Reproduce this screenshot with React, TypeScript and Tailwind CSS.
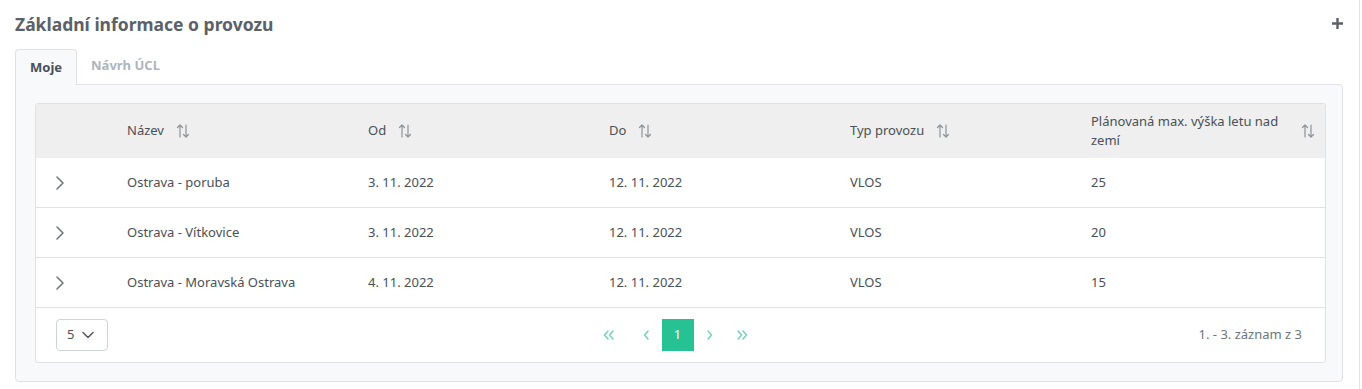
import React from "react";

const font = { fontFamily: '"Noto Sans", "Open Sans", sans-serif' };

function SortIcon() {
  return (
    <svg width="14" height="14" viewBox="0 0 14 14" fill="none" stroke="#8c939a" strokeWidth="1.2" strokeLinecap="round" strokeLinejoin="round" className="shrink-0">
      <path d="M4 13V1M1.5 3.5L4 1l2.5 2.5" />
      <path d="M10 1v12M7.5 10.5L10 13l2.5-2.5" />
    </svg>
  );
}

function Chevron() {
  return (
    <svg width="24" height="24" viewBox="0 0 24 24" fill="none" stroke="#6c757d" strokeWidth="1.5" strokeLinecap="round" strokeLinejoin="round">
      <path d="M9 6l6 6-6 6" />
    </svg>
  );
}

const rows = [
  ["Ostrava - poruba", "3. 11. 2022", "12. 11. 2022", "VLOS", "25"],
  ["Ostrava - Vítkovice", "3. 11. 2022", "12. 11. 2022", "VLOS", "20"],
  ["Ostrava - Moravská Ostrava", "4. 11. 2022", "12. 11. 2022", "VLOS", "15"],
];

const grid = "grid grid-cols-[77px_241px_241px_241px_241px_1fr]";

export default function App() {
  return (
    <div className="w-[1362px] h-[389px] bg-white flex" style={font}>
      <div className="w-[1360px] h-full border-r border-[#e4e4e4] pl-[15px] pr-[16px]">
        <div className="flex items-center justify-between h-[48px] pt-[1px] pb-[2px]">
          <h2 className="text-[17.5px] font-bold text-[#5b6168] leading-6">Základní informace o provozu</h2>
          <svg width="13" height="13" viewBox="0 0 13 13" className="mr-[-1px]">
            <path d="M6.5 1v11M1 6.5h11" stroke="#5b6168" strokeWidth="2.4" />
          </svg>
        </div>
        <div className="flex">
          <div className="h-[36px] px-[14px] flex items-center bg-[#f8f9fa] border border-b-0 border-[#dee2e6] rounded-t-[4px] text-[13px] font-bold text-[#495057] relative top-[1px]">
            Moje
          </div>
          <div className="h-[36px] px-[14px] flex items-center text-[13px] font-bold text-[#adb5bd]">Návrh ÚCL</div>
        </div>
        <div className="bg-[#f8f9fa] border border-[#dee2e6] rounded-b-[4px] rounded-tr-[4px] pt-[18px] pb-[18px] pl-[19px] pr-[16px]">
          <div className="bg-white border border-[#dee2e6] rounded-[3px] text-[13px] text-[#495057]">
            <div className={`${grid} h-[54px] bg-[#efefef] items-center`}>
              <div />
              {["Název", "Od", "Do", "Typ provozu"].map((h) => (
                <div key={h} className="pl-[14px] flex items-center gap-[12px]">
                  <span>{h}</span>
                  <SortIcon />
                </div>
              ))}
              <div className="pl-[14px] pr-[12px] flex items-center justify-between gap-[10px]">
                <span className="leading-[19px] w-[200px]">Plánovaná max. výška letu nad zemí</span>
                <SortIcon />
              </div>
            </div>
            {rows.map((r, i) => (
              <div key={i} className={`${grid} h-[50px] items-center border-b border-[#dee2e6]`}>
                <div className="pl-[12px] flex items-center">
                  <Chevron />
                </div>
                {r.map((c, j) => (
                  <div key={j} className="pl-[14px]">{c}</div>
                ))}
              </div>
            ))}
            <div className="grid grid-cols-[1fr_auto_1fr] items-center h-[54px] pl-[20px] pr-[23px]">
              <div className="flex">
                <div className="w-[52px] h-[32px] border border-[#ced4da] rounded-[4px] flex items-center pl-[10px] gap-[8px] text-[#495057]">
                  <span>5</span>
                  <svg width="12" height="8" viewBox="0 0 12 8" fill="none" stroke="#495057" strokeWidth="1.4" strokeLinecap="round" strokeLinejoin="round">
                    <path d="M1 1.5l5 5 5-5" />
                  </svg>
                </div>
              </div>
              <div className="flex items-center text-[#6fd3b1] mr-[8px]">
                <div className="w-8 h-8 flex items-center justify-center">
                  <svg width="12" height="10" viewBox="0 0 12 10" fill="none" stroke="currentColor" strokeWidth="1.4" strokeLinecap="round" strokeLinejoin="round">
                    <path d="M5 1L1.5 5 5 9M10 1L6.5 5 10 9" />
                  </svg>
                </div>
                <div className="w-8 h-8 ml-[6px] flex items-center justify-center">
                  <svg width="7" height="10" viewBox="0 0 7 10" fill="none" stroke="currentColor" strokeWidth="1.4" strokeLinecap="round" strokeLinejoin="round">
                    <path d="M5 1L1.5 5 5 9" />
                  </svg>
                </div>
                <div className="w-8 h-8 ml-[-1px] flex items-center justify-center bg-[#26c294] text-white text-[13px]">1</div>
                <div className="w-8 h-8 flex items-center justify-center">
                  <svg width="7" height="10" viewBox="0 0 7 10" fill="none" stroke="currentColor" strokeWidth="1.4" strokeLinecap="round" strokeLinejoin="round">
                    <path d="M2 1l3.5 4L2 9" />
                  </svg>
                </div>
                <div className="w-8 h-8 flex items-center justify-center">
                  <svg width="12" height="10" viewBox="0 0 12 10" fill="none" stroke="currentColor" strokeWidth="1.4" strokeLinecap="round" strokeLinejoin="round">
                    <path d="M2 1l3.5 4L2 9M7 1l3.5 4L7 9" />
                  </svg>
                </div>
              </div>
              <div className="flex justify-end text-[#6c757d]">1. - 3. záznam z 3</div>
            </div>
          </div>
        </div>
      </div>
    </div>
  );
}
